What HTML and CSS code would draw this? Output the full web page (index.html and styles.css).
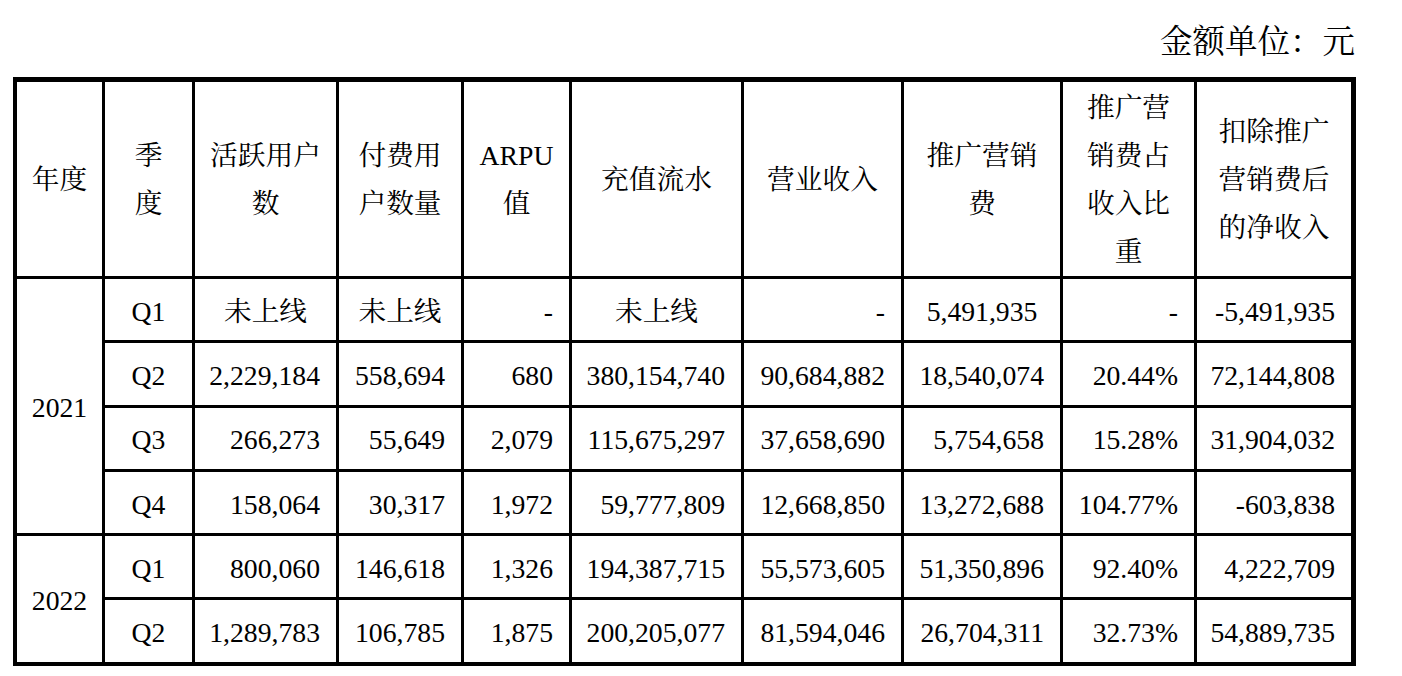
FILE: index.html
```html
<!DOCTYPE html>
<html lang="zh-CN">
<head>
<meta charset="utf-8">
<title>金额单位：元</title>
<link rel="stylesheet" href="styles.css">
</head>
<body>
<div class="page">
  <div class="unit">金额单位：元</div>
  <table class="tbl">
    <colgroup>
      <col class="w1"><col class="w2"><col class="w3"><col class="w4"><col class="w5">
      <col class="w6"><col class="w7"><col class="w8"><col class="w9"><col class="w10">
    </colgroup>
    <thead>
      <tr class="head">
        <th>年度</th>
        <th>季<br>度</th>
        <th>活跃用户<br>数</th>
        <th>付费用<br>户数量</th>
        <th>ARPU<br>值</th>
        <th>充值流水</th>
        <th>营业收入</th>
        <th>推广营销<br>费</th>
        <th>推广营<br>销费占<br>收入比<br>重</th>
        <th>扣除推广<br>营销费后<br>的净收入</th>
      </tr>
    </thead>
    <tbody>
      <tr>
        <td class="c" rowspan="4">2021</td>
        <td class="c">Q1</td>
        <td class="c">未上线</td>
        <td class="c">未上线</td>
        <td class="r">-</td>
        <td class="c">未上线</td>
        <td class="r">-</td>
        <td class="c">5,491,935</td>
        <td class="r">-</td>
        <td class="r">-5,491,935</td>
      </tr>
      <tr>
        <td class="c">Q2</td>
        <td class="r">2,229,184</td>
        <td class="r">558,694</td>
        <td class="r">680</td>
        <td class="r">380,154,740</td>
        <td class="r">90,684,882</td>
        <td class="r">18,540,074</td>
        <td class="r">20.44%</td>
        <td class="r">72,144,808</td>
      </tr>
      <tr>
        <td class="c">Q3</td>
        <td class="r">266,273</td>
        <td class="r">55,649</td>
        <td class="r">2,079</td>
        <td class="r">115,675,297</td>
        <td class="r">37,658,690</td>
        <td class="r">5,754,658</td>
        <td class="r">15.28%</td>
        <td class="r">31,904,032</td>
      </tr>
      <tr>
        <td class="c">Q4</td>
        <td class="r">158,064</td>
        <td class="r">30,317</td>
        <td class="r">1,972</td>
        <td class="r">59,777,809</td>
        <td class="r">12,668,850</td>
        <td class="r">13,272,688</td>
        <td class="r">104.77%</td>
        <td class="r">-603,838</td>
      </tr>
      <tr>
        <td class="c" rowspan="2">2022</td>
        <td class="c">Q1</td>
        <td class="r">800,060</td>
        <td class="r">146,618</td>
        <td class="r">1,326</td>
        <td class="r">194,387,715</td>
        <td class="r">55,573,605</td>
        <td class="r">51,350,896</td>
        <td class="r">92.40%</td>
        <td class="r">4,222,709</td>
      </tr>
      <tr>
        <td class="c">Q2</td>
        <td class="r">1,289,783</td>
        <td class="r">106,785</td>
        <td class="r">1,875</td>
        <td class="r">200,205,077</td>
        <td class="r">81,594,046</td>
        <td class="r">26,704,311</td>
        <td class="r">32.73%</td>
        <td class="r">54,889,735</td>
      </tr>
    </tbody>
  </table>
</div>
</body>
</html>
```

FILE: styles.css
```css
html, body {
  margin: 0;
  padding: 0;
  background: #fff;
}

.page {
  padding: 22px 0 0 13px;
  width: 1343px;
  font-family: "Liberation Serif", "Noto Serif CJK SC", "Noto Sans CJK SC", serif;
  color: #000;
}

.unit {
  text-align: right;
  font-size: 32.5px;
  line-height: 40px;
  height: 40px;
  padding-right: 1px;
  margin-bottom: 15px;
}

.tbl {
  border-collapse: collapse;
  table-layout: fixed;
  width: 1343px;
  border: 4px solid #000;
  border-top-width: 5px;
  border-right-width: 5px;
  font-size: 27.7px;
  line-height: 48px;
}

.w1 { width: 88.5px; }
.w2 { width: 90px; }
.w3 { width: 144px; }
.w4 { width: 125px; }
.w5 { width: 108px; }
.w6 { width: 172px; }
.w7 { width: 160px; }
.w8 { width: 159px; }
.w9 { width: 134px; }
.w10 { width: 158px; }

.tbl th,
.tbl td {
  border: 3px solid #000;
  padding: 4px 16px 0 0;
  vertical-align: middle;
  white-space: nowrap;
}

.tbl th {
  font-weight: normal;
  text-align: center;
  padding: 2px 0 0 0;
  height: 190.5px;
}

.tbl td {
  height: 57.3px;
}

.tbl td.c {
  text-align: center;
  padding-right: 0;
}

.tbl td.r {
  text-align: right;
}
```
